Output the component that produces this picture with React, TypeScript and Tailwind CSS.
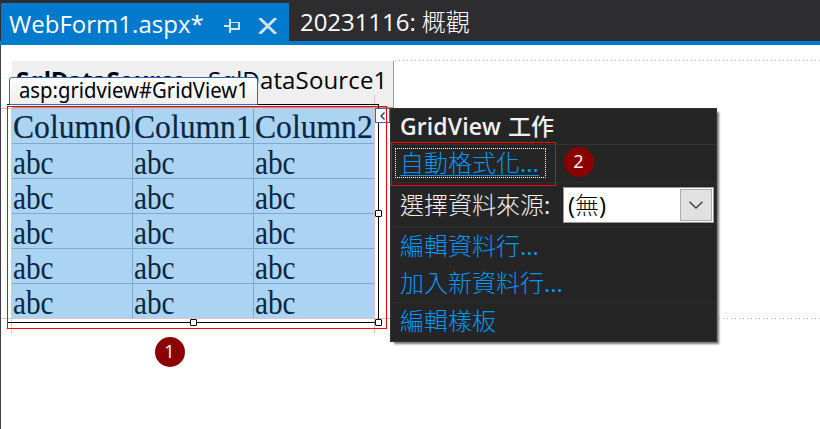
import React from "react";

const cjk = "font-['Open_Sans','Noto_Sans_CJK_TC',sans-serif]";
const rows = [0, 1, 2, 3, 4];
const columns = ["Column0", "Column1", "Column2"];

function PinIcon() {
  return (
    <svg className="mt-[3px] h-[14px] w-[17px] shrink-0" viewBox="0 0 17 14" fill="none" stroke="#d0e6f5" shapeRendering="crispEdges">
      <path d="M0 7H6M6 0V14M6 3.5H15.5V11" strokeWidth="1.4" />
      <path d="M6 10H16M15 3V11" strokeWidth="2" />
    </svg>
  );
}

function CloseIcon() {
  return (
    <svg className="mt-[3px] h-[16px] w-[20px] shrink-0" viewBox="0 0 20 16" fill="none" stroke="#d0e6f5" strokeWidth="2.8">
      <path d="M1.5 0L18 16M18 0L1.5 16" />
    </svg>
  );
}

function TabBar() {
  return (
    <header className="flex h-[45px] border-b-4 border-[#007acc] bg-[#2d2d30]">
      <div className="mt-[3px] ml-px flex h-[42px] w-[288px] shrink-0 items-center bg-[#007acc] pl-[8px] text-white">
        <span className="w-[215px] shrink-0 text-[24px] leading-[42px] tracking-[0.02px] whitespace-nowrap">WebForm1.aspx*</span>
        <PinIcon />
        <span className="w-[17px] shrink-0" />
        <CloseIcon />
      </div>
      <span className="ml-[11px] text-[24px] leading-[43px] font-light tracking-[-0.05px] whitespace-nowrap text-white">
        <span className="font-normal">20231116: </span>概觀
      </span>
    </header>
  );
}

function GridPreview() {
  return (
    <div className="grid w-[363px] grid-cols-[121px_121px_121px] grid-rows-[36px_35px_35px_35px_35px_34px] bg-[#abd3f2] font-['Liberation_Serif',serif] text-[#0b2743]">
      {columns.map((name, i) => (
        <div key={name} className={`border-b border-[#80a8cf] pl-[1px] text-[34px] leading-[37px] whitespace-nowrap ${i < 2 ? "border-r" : ""}`}>
          <span className="block h-[35px] w-[128px] origin-left scale-x-[0.93] [-webkit-text-stroke:0.2px]">{name}</span>
        </div>
      ))}
      {rows.map((r) =>
        columns.map((name, i) => (
          <div key={`${r}-${name}`} className={`border-[#80a8cf] pl-[1px] text-[34px] leading-[38px] ${r < 4 ? "border-b" : ""} ${i < 2 ? "border-r" : ""}`}>
            <span className="block h-[34px] w-[60px] origin-left scale-x-[0.86]">abc</span>
          </div>
        )),
      )}
    </div>
  );
}

function SelectionFrame() {
  return (
    <>
      <i className="absolute top-[108px] left-px h-px w-[389px] bg-[#e0c0c0]" />
      <i className="absolute top-[318px] left-px h-px w-[389px] bg-[#dcc4c4]" />
      <i className="absolute top-[108px] left-[11px] h-[225px] w-px bg-[#dcc4c4]" />
      <i className="absolute top-[95px] left-[374px] h-[238px] w-px bg-[#e0c0c0]" />
      <div className="absolute top-[104px] left-[7px] h-[219px] w-[372px] border border-l-0 border-black" />
      <div className="absolute top-[106px] left-[7px] h-[223px] w-[380px] border border-[#ff0000]" />
      <i className="absolute top-[210px] left-[375px] size-[7px] rounded-[1px] border border-black bg-white" />
      <i className="absolute top-[319px] left-[190px] size-[7px] rounded-[1px] border border-black bg-white" />
      <i className="absolute top-[319px] left-[375px] size-[7px] rounded-[1px] border border-black bg-white" />
      <div className="absolute top-[77px] left-[9px] h-[28px] w-[249px] rounded-t-[3px] border border-[#316ac5] bg-linear-to-b from-white to-[#eeeeee] pl-[9px] font-['Noto_Sans',sans-serif] text-[21px] leading-[25px] whitespace-nowrap text-black">
        <span className="inline-block origin-left scale-x-[0.965]">asp:gridview#GridView1</span>
      </div>
      <div className="absolute top-[108px] left-[375px] flex h-[15px] w-[15px] items-center justify-center border border-[#316ac5] bg-[#f8f8fa]">
        <svg className="h-[8px] w-[5px]" viewBox="0 0 5 8" fill="none" stroke="#17365d" strokeWidth="1.3">
          <path d="M4.5 .5L1 4L4.5 7.5" />
        </svg>
      </div>
      <i className="absolute top-[106px] left-[386px] h-[20px] w-px bg-[#ff0000]" />
    </>
  );
}

function TasksPanel() {
  return (
    <section className="absolute top-[108px] left-[390px] flex h-[234px] w-[327px] flex-col border border-[#333337] bg-[#252526] text-[24px] font-light text-[#0097fb] shadow-[3px_3px_2px_-1px_rgba(0,0,0,0.55)]">
      <h2 className="h-[36px] shrink-0 border-b border-[#333337] pl-[9px] text-[23px] leading-[35px] font-semibold tracking-[0.1px] whitespace-nowrap text-[#f1f1f1]">
        GridView <span className="ml-[1px] font-medium">工作</span>
      </h2>
      <div className="mx-[2px] flex h-[38px] shrink-0 border-b border-[#303033]">
        <a className="mt-[3px] ml-[2px] h-[30px] w-[151px] border border-dotted border-white pl-[4px] leading-[27px] whitespace-nowrap underline decoration-1 underline-offset-[3px]">自動格式化<span className="font-normal">...</span></a>
      </div>
      <div className="mx-[2px] flex h-[45px] shrink-0 items-center border-b border-[#303033] pl-[7px] text-[#f1f1f1]">
        <span className="w-[163px] shrink-0 whitespace-nowrap">選擇資料來源<span className="font-normal">:</span></span>
        <div className="flex h-[36px] w-[151px] shrink-0 items-center justify-between border border-[#999] bg-white pr-[1px] pl-[4px] text-black">
          <span className="leading-[32px]"><span className="font-normal">(</span>無<span className="font-normal">)</span></span>
          <span className="flex h-[32px] w-[32px] items-center justify-center border border-[#acacac] bg-[#e1e1e1]">
            <svg className="h-[8px] w-[14px]" viewBox="0 0 14 8" fill="none" stroke="#404040" strokeWidth="1.4">
              <path d="M.5 .7L7 7L13.5 .7" />
            </svg>
          </span>
        </div>
      </div>
      <div className="mx-[2px] h-[75px] shrink-0 border-b border-[#303033] pl-[7px] leading-[37px] whitespace-nowrap">
        <div className="-mt-px">編輯資料行<span className="font-normal">...</span></div>
        <div>加入新資料行<span className="font-normal">...</span></div>
      </div>
      <div className="-mt-px pl-[9px] leading-[37px]">編輯樣板</div>
    </section>
  );
}

function Badge({ label, place }: { label: string; place: string }) {
  return (
    <span className={`absolute flex size-[30px] items-center justify-center rounded-full bg-[#8b0000] pr-px pb-[2px] font-['Open_Sans',sans-serif] text-[18px] leading-none text-white ${place}`}>
      {label}
    </span>
  );
}

export default function App() {
  return (
    <main className={`relative h-[429px] w-[820px] overflow-hidden bg-white ${cjk}`}>
      <TabBar />
      <div className="h-[384px] border-l border-[#3f3f46] pt-[16px] pl-[11px]">
        <div className="flex h-[47px] w-[382px] border-r border-b border-[#999] bg-[#efefef] pl-[4px] text-[24px] leading-[38px] whitespace-nowrap text-black">
          <span className="w-[168px] shrink-0 font-bold tracking-[-0.35px]">SqlDataSource</span>
          <span className="w-[24px] shrink-0 text-center">-</span>
          <span className="tracking-[0.15px]">SqlDataSource1</span>
        </div>
        <GridPreview />
      </div>
      <i className="absolute top-[60px] left-[395px] h-px w-[425px] bg-[repeating-linear-gradient(90deg,#b8b8b8_0_1px,transparent_1px_4px)]" />
      <i className="absolute top-[318px] left-[719px] h-px w-[101px] bg-[repeating-linear-gradient(90deg,#b8b8b8_0_1px,transparent_1px_4px)]" />
      <SelectionFrame />
      <TasksPanel />
      <div className="absolute top-[142px] left-[391px] h-[44px] w-[165px] border border-[#ff0000]" />
      <Badge label="1" place="top-[337px] left-[155px]" />
      <Badge label="2" place="top-[147px] left-[564px]" />
    </main>
  );
}
